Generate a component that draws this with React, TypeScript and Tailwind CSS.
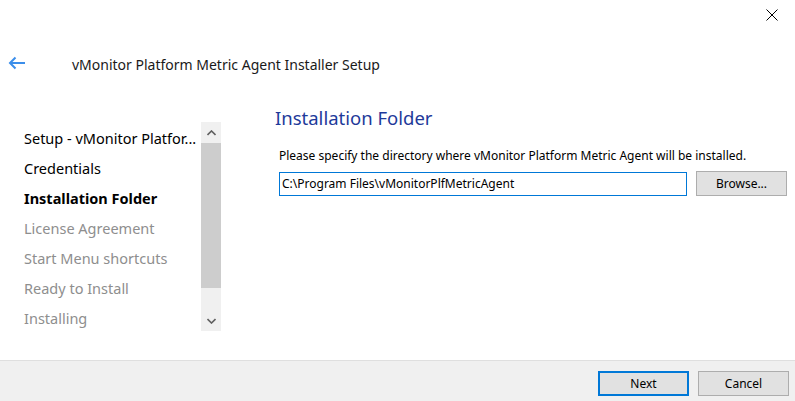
import React from "react";

const steps = [
  { label: "Setup - vMonitor Platfor...", state: "done" },
  { label: "Credentials", state: "done" },
  { label: "Installation Folder", state: "current" },
  { label: "License Agreement", state: "todo" },
  { label: "Start Menu shortcuts", state: "todo" },
  { label: "Ready to Install", state: "todo" },
  { label: "Installing", state: "todo" },
];

const App = () => {
  return (
    <div
      className="w-[795px] h-[401px] bg-white flex flex-col text-black overflow-hidden"
      style={{ fontFamily: '"Segoe UI", "Noto Sans", "Open Sans", sans-serif' }}
    >
      {/* title bar */}
      <div className="h-[32px] flex justify-end">
        <button className="w-[46px] h-[30px] flex items-center justify-center">
          <svg width="12" height="12" viewBox="0 0 12 12">
            <path d="M0.5 0.5 L11.5 11.5 M11.5 0.5 L0.5 11.5" stroke="#000" strokeWidth="1" />
          </svg>
        </button>
      </div>

      {/* header */}
      <div className="h-[62px] flex items-start pt-[22px]">
        <div className="w-[72px] pl-[8px] pt-[2px]">
          <svg width="18" height="14" viewBox="0 0 18 14">
            <path d="M17 7 H2 M7.5 1.5 L2 7 L7.5 12.5" stroke="#3b8eea" strokeWidth="2" fill="none" />
          </svg>
        </div>
        <div className="text-[14px] text-[#1a1a1a]">vMonitor Platform Metric Agent Installer Setup</div>
      </div>

      {/* body */}
      <div className="flex-1 flex">
        <div className="w-[275px] flex pl-[24px]">
          <div className="w-[177px] pt-[30px] flex flex-col">
            {steps.map((s) => (
              <div
                key={s.label}
                className={
                  "h-[30px] flex items-center text-[14.5px] whitespace-nowrap " +
                  (s.state === "current"
                    ? "font-bold text-black"
                    : s.state === "done"
                    ? "text-black"
                    : "text-[#8e8e8e]")
                }
              >
                {s.label}
              </div>
            ))}
          </div>
          <div className="mt-[28px] w-[20px] h-[209px] bg-[#f0f0f0] flex flex-col">
            <div className="h-[21px] flex items-center justify-center">
              <svg width="9" height="6" viewBox="0 0 9 6">
                <path d="M0.5 5 L4.5 1 L8.5 5" stroke="#606060" strokeWidth="1.6" fill="none" />
              </svg>
            </div>
            <div className="h-[145px] bg-[#cdcdcd]" />
            <div className="flex-1 flex items-end justify-center pb-[7px]">
              <svg width="9" height="6" viewBox="0 0 9 6">
                <path d="M0.5 1 L4.5 5 L8.5 1" stroke="#606060" strokeWidth="1.6" fill="none" />
              </svg>
            </div>
          </div>
        </div>

        <div className="flex-1 flex flex-col pt-[10px]">
          <div className="text-[18.5px] text-[#1e3a9a] leading-[28px]">Installation Folder</div>
          <div className="pl-[4px] pt-[16px] text-[12px] leading-[16px]">
            Please specify the directory where vMonitor Platform Metric Agent will be installed.
          </div>
          <div className="pl-[4px] pt-[7px] flex items-center gap-[9px]">
            <div className="w-[408px] h-[24px] border border-[#0078d7] flex items-center px-[2px] text-[12px]">
              C:\Program Files\vMonitorPlfMetricAgent
            </div>
            <button className="w-[91px] h-[25px] bg-[#e1e1e1] border border-[#adadad] text-[12px]">
              Browse...
            </button>
          </div>
        </div>
      </div>

      {/* footer */}
      <div className="h-[41px] bg-[#f0f0f0] border-t border-[#dfdfdf] flex items-start pt-[10px] justify-end pr-[6px] gap-[9px]">
        <button className="w-[91px] h-[25px] bg-[#e1e1e1] border-2 border-[#0078d7] text-[12px]">
          Next
        </button>
        <button className="w-[91px] h-[25px] bg-[#e1e1e1] border border-[#adadad] text-[12px]">
          Cancel
        </button>
      </div>
    </div>
  );
};

export default App;
